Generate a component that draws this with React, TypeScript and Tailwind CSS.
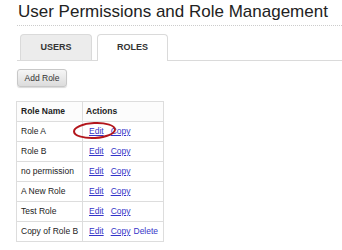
import React from "react";

type Role = {
  name: string;
  canDelete?: boolean;
};

const roles: Role[] = [
  { name: "Role A" },
  { name: "Role B" },
  { name: "no permission" },
  { name: "A New Role" },
  { name: "Test Role" },
  { name: "Copy of Role B", canDelete: true },
];

const App = () => {
  return (
    <div
      className="w-[342px] h-[250px] bg-white overflow-hidden pl-[17px] text-[#222]"
      style={{ fontFamily: '"Liberation Sans", Arial, sans-serif' }}
    >
      {/* page title */}
      <h1 className="h-[26px] text-[17px] leading-[20px] pt-[2px] pl-px whitespace-nowrap text-[#222] border-b border-dotted border-[#ccc]">
        User Permissions and Role Management
      </h1>

      {/* tabs */}
      <div className="flex items-end gap-[5px] mt-[8px] pl-[3px] border-b border-[#dadada]">
        <div className="w-[72px] h-[26px] flex items-center justify-center bg-[#ececec] border border-b-0 border-[#dadada] rounded-t-[4px] text-[9px] font-bold text-[#333]">
          USERS
        </div>
        <div className="w-[71px] h-[27px] -mb-px flex items-center justify-center bg-white border border-b-0 border-[#dadada] rounded-t-[4px] text-[9px] font-bold text-[#333]">
          ROLES
        </div>
      </div>

      {/* add role button */}
      <button
        type="button"
        className="block mt-[8px] w-[50px] h-[18px] bg-gradient-to-b from-[#f6f6f6] to-[#dcdcdc] border border-[#c8c8c8] rounded-[3px] text-[8.5px] text-[#333] shadow-[0_1px_1px_rgba(0,0,0,0.15)]"
      >
        Add Role
      </button>

      {/* roles table */}
      <table className="table-fixed w-[147px] mt-[14px] -ml-px border-collapse border border-[#ddd] text-[8.5px] text-[#222]">
        <thead>
          <tr className="h-[20px]">
            <th className="w-[66px] border border-[#ddd] text-left font-bold pl-[4px] p-0 bg-[#fcfcfc]">
              Role Name
            </th>
            <th className="w-[81px] border border-[#ddd] text-left font-bold pl-[3px] p-0 bg-[#fcfcfc]">
              Actions
            </th>
          </tr>
        </thead>
        <tbody>
          {roles.map((role, index) => (
            <tr className="h-[20px]" key={`role${index}`}>
              <td className="border border-[#ddd] pl-[4px] whitespace-nowrap">
                {role.name}
              </td>
              <td className="border border-[#ddd] pl-[6px] whitespace-nowrap relative">
                <span className="text-[#3535c8] underline">Edit</span>
                <span className="text-[#3535c8] underline ml-[7px]">Copy</span>
                {role.canDelete && (
                  <span className="text-[#3535c8] ml-[3px]">Delete</span>
                )}
                {index === 0 && (
                  <span className="absolute left-[-10px] top-[0px] w-[43px] h-[17px] rounded-[50%] border-2 border-[#b3161c] -rotate-3" />
                )}
              </td>
            </tr>
          ))}
        </tbody>
      </table>
    </div>
  );
};

export default App;
